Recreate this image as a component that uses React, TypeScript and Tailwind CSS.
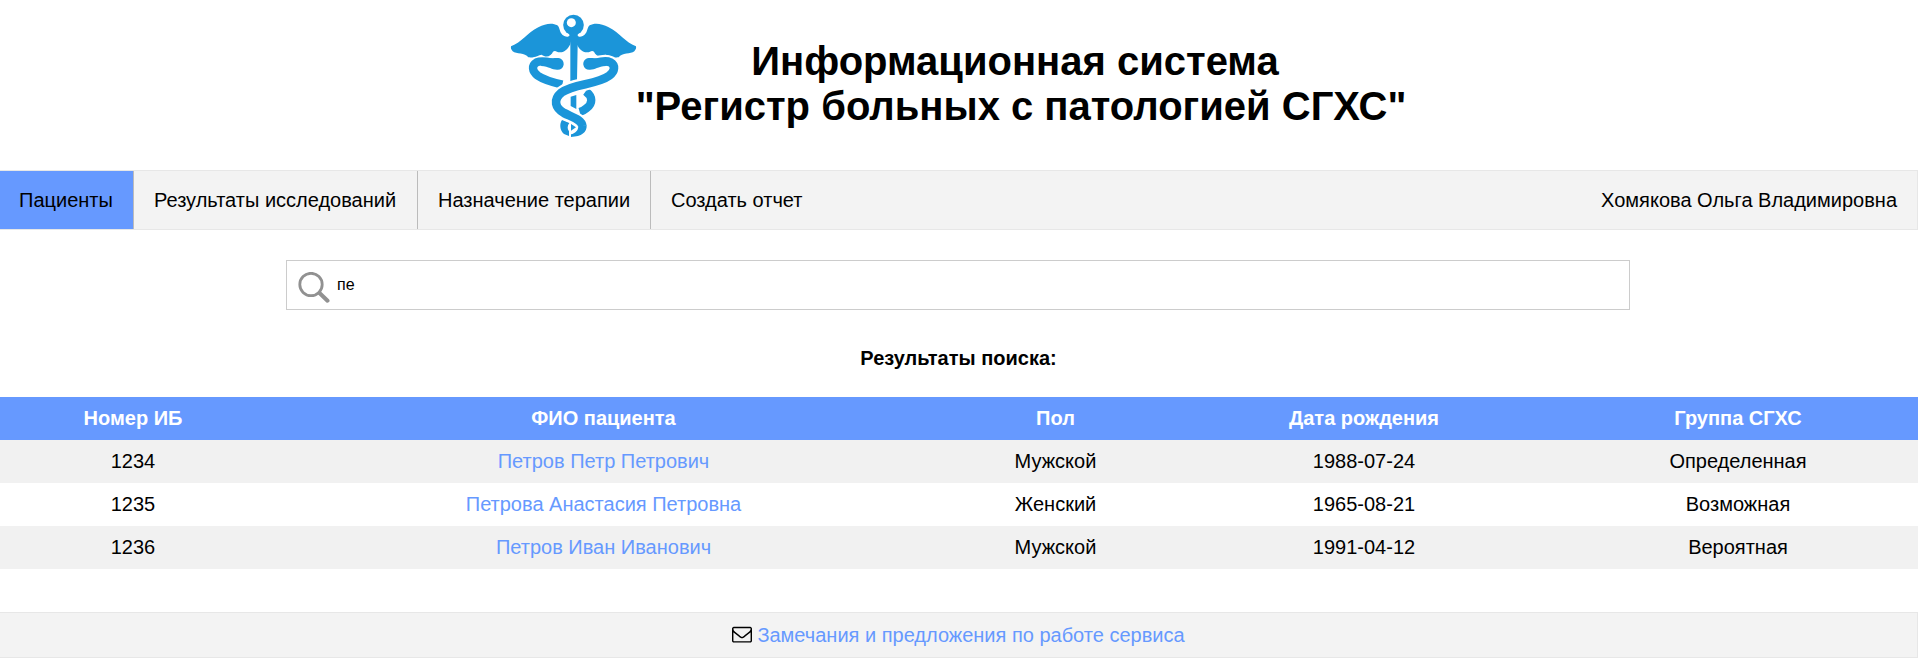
const patients = [
  { id: '1234', name: 'Петров Петр Петрович', sex: 'Мужской', born: '1988-07-24', group: 'Определенная' },
  { id: '1235', name: 'Петрова Анастасия Петровна', sex: 'Женский', born: '1965-08-21', group: 'Возможная' },
  { id: '1236', name: 'Петров Иван Иванович', sex: 'Мужской', born: '1991-04-12', group: 'Вероятная' },
];

const columns = ['Номер ИБ', 'ФИО пациента', 'Пол', 'Дата рождения', 'Группа СГХС'];

const wing =
  'M30 124C62 112 78 84 112 67C134 54 156 53 169 61C178 68 174 86 190 93C197 97 203 96 207 91L207 119C200 131 192 142 177 142C168 143 164 134 156 140C152 152 136 160 122 149C112 150 104 159 82 157C72 143 46 148 35 139C30 133 29 129 30 124Z';
const head = 'M125 160C145 162 160 158 172 159C183 161 189 169 188 179C186 190 178 195 168 194C152 194 145 185 120 183Z';
const snake =
  'M269 177C289 173 311 164 328 172C344 181 342 199 325 212C286 241 218 234 181 263C155 285 163 309 189 324C215 337 242 344 244 363';

function Caduceus() {
  return (
    <svg className="h-[126px] w-[130px] shrink-0" viewBox="24 24 390 378" fill="none">
      <g fill="#1b95d9">
        <path d={wing} />
        <path d={wing} transform="matrix(-1 0 0 1 435 0)" />
        <path d="M205 86H230V120L228 226L208 232V120Z" />
        <path d="M209 275L226 270V312L209 303Z" />
        <path d="M210 357L225 367L210 377Z" />
        <path d="M183 345C175 356 176 376 189 387L204 393V379C198 371 199 362 205 354Z" />
        <circle cx="217.500" cy="60" r="31" />
      </g>
      <circle cx="211" cy="53" r="13.500" fill="#fff" />
      <g stroke="#1b95d9" strokeWidth="25">
        <path d="M152 173C136 169 120 166 107 172C91 181 93 199 110 212C130 226 158 233 184 239" />
        <path d="M254 259C276 275 276 296 256 310C249 316 243 319 236 321" />
      </g>
      <path d={snake} stroke="#fff" strokeWidth="39" />
      <path d={snake} stroke="#1b95d9" strokeWidth="26" />
      <path d="M257 361C258 382 242 395 210 396V388C222 384 232 378 232 362Z" fill="#1b95d9" />
      <path d={head} fill="#1b95d9" />
      <path d={head} transform="matrix(-1 0 0 1 435 0)" fill="#1b95d9" />
    </svg>
  );
}

function SearchIcon() {
  return (
    <svg className="mt-[11px] ml-[11px] size-8 shrink-0" viewBox="0 0 32 32" fill="none" stroke="#919191">
      <circle cx="13" cy="12.500" r="11.200" strokeWidth="2.800" />
      <path d="M21.500 21L29.500 28.700" strokeWidth="4" strokeLinecap="round" />
    </svg>
  );
}

function Envelope() {
  return (
    <svg className="mr-[5px] mb-[2px] size-5 shrink-0" viewBox="0 0 1792 1792" fill="currentColor">
      <path d="M1664 1504v-768q-32 36-69 66-268 206-426 338-51 43-83 67t-86.500 48.500-102.500 24.500h-2q-48 0-102.500-24.500t-86.500-48.500-83-67q-158-132-426-338-37-30-69-66v768q0 13 9.500 22.500t22.500 9.500h1472q13 0 22.500-9.500t9.500-22.500zm0-1051v-24.500l-.5-13-3-12.500-5.500-9-9-7.500-14-2.500h-1472q-13 0-22.500 9.500t-9.500 22.500q0 168 147 284 193 152 401 317 6 5 35 29.500t46 37.500 44.500 31.500 50.500 27.500 43 9h2q20 0 43-9t50.500-27.500 44.500-31.500 46-37.500 35-29.500q208-165 401-317 54-43 100.500-115.500t46.500-131.500zm128-37v1088q0 66-47 113t-113 47h-1472q-66 0-113-47t-47-113v-1088q0-66 47-113t113-47h1472q66 0 113 47t47 113z" />
    </svg>
  );
}

export default function App() {
  return (
    <div className="flex h-[658px] w-full flex-col overflow-hidden bg-white font-['Liberation_Sans',Arial,sans-serif] text-xl leading-[23px] text-black">
      <header className="flex h-[170px] shrink-0 justify-center pt-[13px] pr-[3px]">
        <Caduceus />
        <h1 className="-ml-[3px] pt-[26px] text-center text-[40px] leading-[45px] font-bold">
          <span className="block pr-[12px]">Информационная система</span>
          <span className="block">"Регистр больных с патологией СГХС"</span>
        </h1>
      </header>

      <nav className="flex h-[60px] shrink-0 border border-l-0 border-[#e7e7e7] bg-[#f3f3f3] leading-[58px]">
        <a className="w-[134px] border-r border-[#bbb] bg-[#6699ff] pl-[19px]">Пациенты</a>
        <a className="w-[284px] border-r border-[#bbb] pl-5">Результаты исследований</a>
        <a className="w-[233px] border-r border-[#bbb] pl-5">Назначение терапии</a>
        <a className="pl-5">Создать отчет</a>
        <a className="ml-auto pr-5">Хомякова Ольга Владимировна</a>
      </nav>

      <div className="mt-[30px] ml-[286px] flex h-[50px] w-[1344px] shrink-0 border border-[#ccc]">
        <SearchIcon />
        <input className="ml-[7px] h-12 grow text-base outline-none" defaultValue="пе" />
      </div>

      <h2 className="mt-[37px] shrink-0 pr-[1px] text-center font-bold">Результаты поиска:</h2>

      <table className="mt-[27px] w-full table-fixed border-collapse text-center">
        <colgroup>
          <col className="w-[266px]" />
          <col className="w-[675px]" />
          <col className="w-[229px]" />
          <col className="w-[388px]" />
          <col className="w-[360px]" />
        </colgroup>
        <thead>
          <tr className="h-[43px] bg-[#6699ff] text-white">
            {columns.map((c) => (
              <th key={c} className="p-0 font-bold">{c}</th>
            ))}
          </tr>
        </thead>
        <tbody>
          {patients.map((p) => (
            <tr key={p.id} className="h-[43px] odd:bg-[#f1f1f1]">
              <td className="p-0">{p.id}</td>
              <td className="p-0 text-[#6699ff]">{p.name}</td>
              <td className="p-0">{p.sex}</td>
              <td className="p-0">{p.born}</td>
              <td className="p-0">{p.group}</td>
            </tr>
          ))}
        </tbody>
      </table>

      <footer className="mt-auto flex h-[46px] shrink-0 items-center justify-center border border-l-0 border-[#e7e7e7] bg-[#f3f3f3]">
        <Envelope />
        <a className="text-[#6699ff]">Замечания и предложения по работе сервиса</a>
      </footer>
    </div>
  );
}
